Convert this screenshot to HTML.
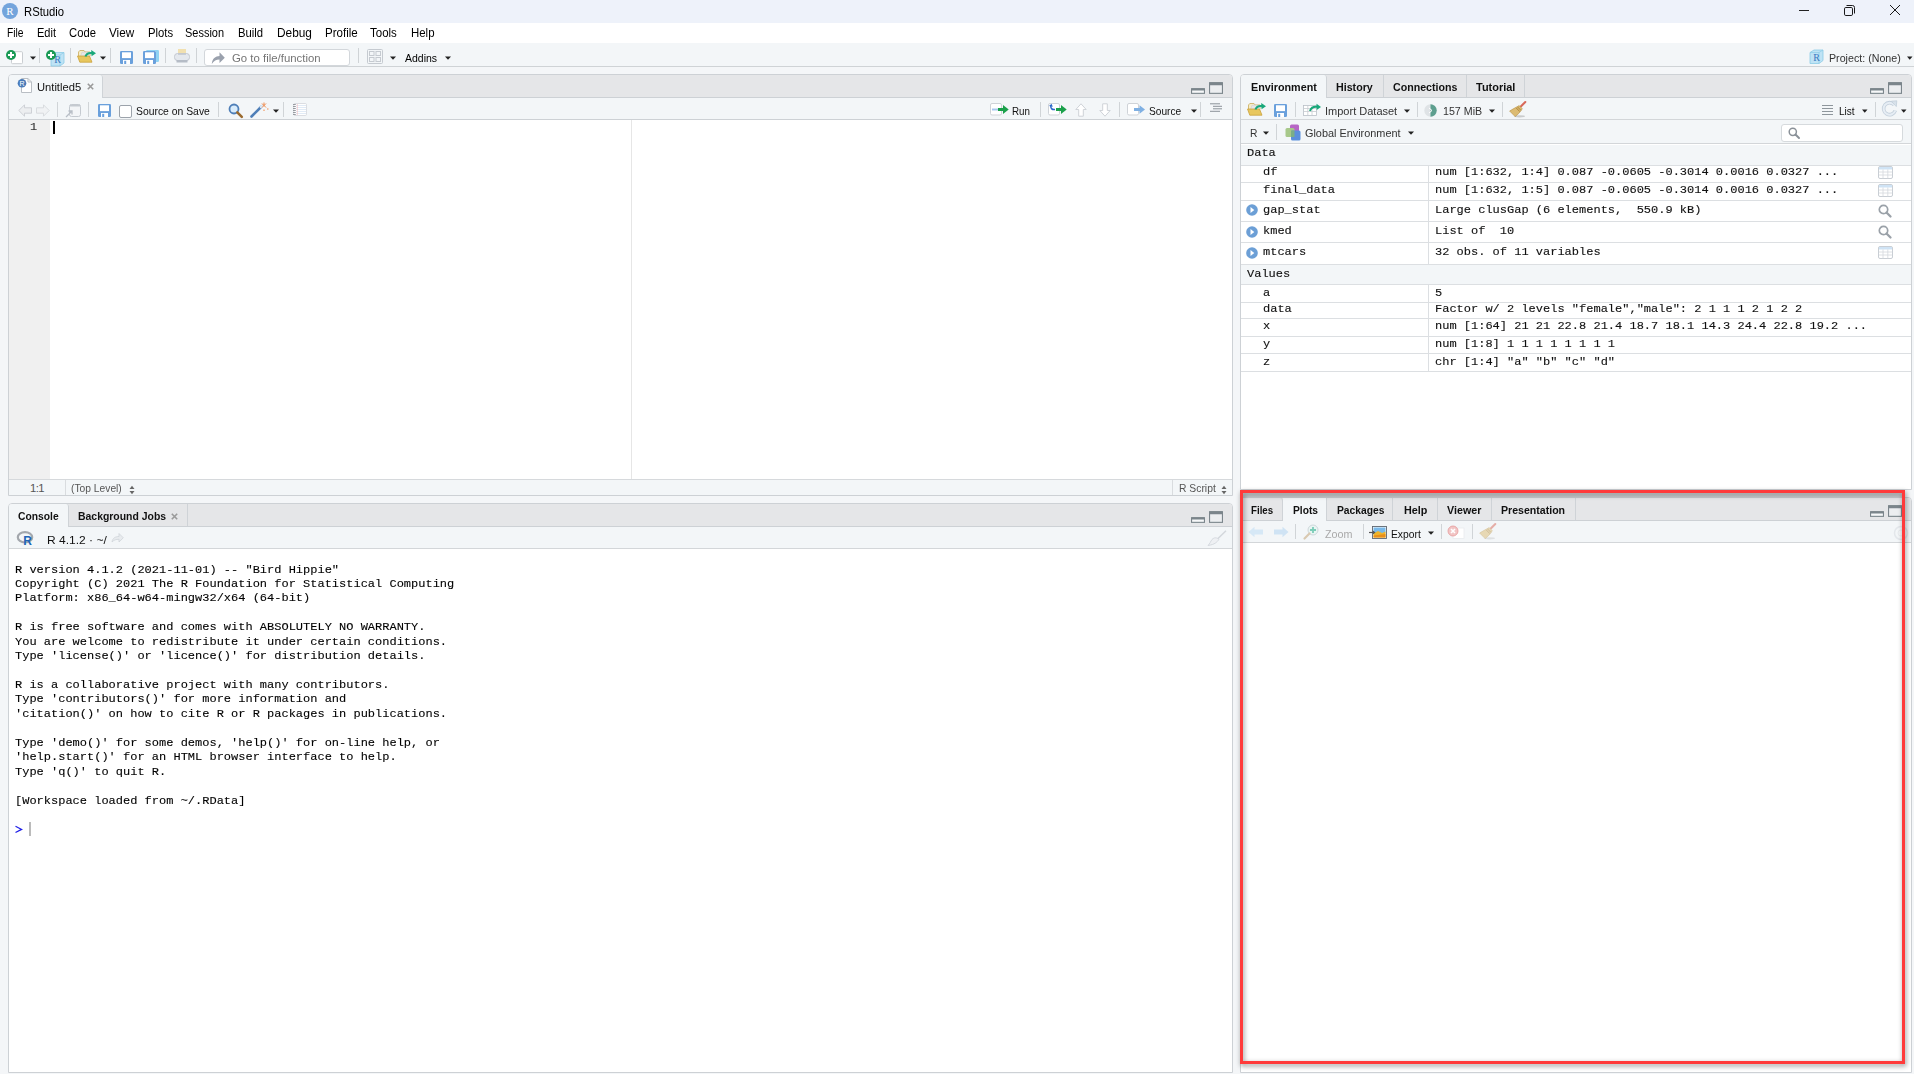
<!DOCTYPE html>
<html><head><meta charset="utf-8"><title>RStudio</title>
<style>
*{box-sizing:border-box;margin:0;padding:0}
html,body{width:1914px;height:1074px;overflow:hidden;background:#f4f6f8;font-family:"Liberation Sans",sans-serif}
.a{position:absolute}
.t{position:absolute;white-space:pre;line-height:1}
.mn{-webkit-text-stroke:0.3px currentColor}
svg.a{overflow:visible}
</style></head><body>

<div class="a" style="left:0px;top:0px;width:1914px;height:23px;background:#eef2fa"></div>
<svg class="a" style="left:2px;top:3px" width="16" height="16" viewBox="0 0 16 16"><circle cx="8" cy="8" r="8" fill="#73a4dc"/><text x="8" y="12.2" text-anchor="middle" font-family="Liberation Serif" font-size="11" fill="#fff">R</text></svg>
<div class="t" style="left:23.50px;top:6.00px;font-family:'Liberation Sans',sans-serif;font-size:12px;font-weight:normal;color:#000;transform:scaleX(0.9395);transform-origin:0 0;">RStudio</div>
<div class="a" style="left:1799px;top:10px;width:10px;height:1px;background:#222"></div>
<svg class="a" style="left:1843px;top:4px" width="13" height="13" viewBox="0 0 13 13"><rect x="1.5" y="3.5" width="8" height="8" rx="1.3" fill="none" stroke="#1a1a1a" stroke-width="1"/><path d="M3.5 1.5H9.5Q11.5 1.5 11.5 3.5V9.5" fill="none" stroke="#1a1a1a" stroke-width="1"/></svg>
<svg class="a" style="left:1889px;top:4px" width="12" height="12" viewBox="0 0 12 12"><path d="M1 1L11 11M11 1L1 11" stroke="#1a1a1a" stroke-width="1"/></svg>
<div class="a" style="left:0px;top:23px;width:1914px;height:20px;background:#fff"></div>
<div class="t" style="left:6.80px;top:27.00px;font-family:'Liberation Sans',sans-serif;font-size:12px;font-weight:normal;color:#000;transform:scaleX(0.8550);transform-origin:0 0;">File</div>
<div class="t" style="left:36.70px;top:27.00px;font-family:'Liberation Sans',sans-serif;font-size:12px;font-weight:normal;color:#000;transform:scaleX(0.9190);transform-origin:0 0;">Edit</div>
<div class="t" style="left:69.30px;top:27.00px;font-family:'Liberation Sans',sans-serif;font-size:12px;font-weight:normal;color:#000;transform:scaleX(0.9379);transform-origin:0 0;">Code</div>
<div class="t" style="left:108.90px;top:27.00px;font-family:'Liberation Sans',sans-serif;font-size:12px;font-weight:normal;color:#000;transform:scaleX(0.9769);transform-origin:0 0;">View</div>
<div class="t" style="left:147.50px;top:27.00px;font-family:'Liberation Sans',sans-serif;font-size:12px;font-weight:normal;color:#000;transform:scaleX(0.9407);transform-origin:0 0;">Plots</div>
<div class="t" style="left:185.10px;top:27.00px;font-family:'Liberation Sans',sans-serif;font-size:12px;font-weight:normal;color:#000;transform:scaleX(0.9140);transform-origin:0 0;">Session</div>
<div class="t" style="left:237.80px;top:27.00px;font-family:'Liberation Sans',sans-serif;font-size:12px;font-weight:normal;color:#000;transform:scaleX(0.9407);transform-origin:0 0;">Build</div>
<div class="t" style="left:276.60px;top:27.00px;font-family:'Liberation Sans',sans-serif;font-size:12px;font-weight:normal;color:#000;transform:scaleX(0.9886);transform-origin:0 0;">Debug</div>
<div class="t" style="left:324.80px;top:27.00px;font-family:'Liberation Sans',sans-serif;font-size:12px;font-weight:normal;color:#000;transform:scaleX(0.9618);transform-origin:0 0;">Profile</div>
<div class="t" style="left:370.20px;top:27.00px;font-family:'Liberation Sans',sans-serif;font-size:12px;font-weight:normal;color:#000;transform:scaleX(0.9571);transform-origin:0 0;">Tools</div>
<div class="t" style="left:410.60px;top:27.00px;font-family:'Liberation Sans',sans-serif;font-size:12px;font-weight:normal;color:#000;transform:scaleX(0.9520);transform-origin:0 0;">Help</div>
<div class="a" style="left:0px;top:43px;width:1914px;height:23px;background:#f3f6f8"></div>
<div class="a" style="left:0px;top:66px;width:1914px;height:1px;background:#cfd3d6"></div>
<svg class="a" style="left:5px;top:49px" width="19" height="16" viewBox="0 0 19 16"><rect x="6.5" y="2.7" width="11" height="12" rx="1" fill="#fff" stroke="#c9cdd1"/><circle cx="6" cy="6" r="5" fill="#1a9a55"/><path d="M3 6H9M6 3V9" stroke="#fff" stroke-width="2"/></svg>
<svg class="a" style="left:30px;top:56px" width="6" height="4" viewBox="0 0 6 4"><path d="M0 0.5H6L3.0 3.8Z" fill="#222"/></svg>
<div class="a" style="left:39px;top:48px;width:1px;height:15px;background:#cfd3d6"></div>
<svg class="a" style="left:45px;top:49px" width="22" height="18" viewBox="0 0 22 18"><g transform="translate(5,2.5) scale(1.0)"><path d="M1 3.5 L5 1 H14 V11.5 L10 14.5 H1 Z" fill="#bfe3f5" stroke="#8ccbe6" stroke-width="0.8"/><path d="M1 3.5 H10 V14.5 M10 3.5 L14 1" fill="none" stroke="#8ccbe6" stroke-width="0.7"/><text x="7.5" y="11.5" text-anchor="middle" font-family="Liberation Serif" font-size="10" fill="#3a78c0">R</text></g><circle cx="6" cy="6" r="5" fill="#1a9a55"/><path d="M3 6H9M6 3V9" stroke="#fff" stroke-width="2"/></svg>
<div class="a" style="left:70px;top:48px;width:1px;height:15px;background:#cfd3d6"></div>
<svg class="a" style="left:77px;top:49px" width="20" height="15" viewBox="0 0 20 15"><path d="M1.5 7 V3 L2.8 1.5 H7 L8.2 3 H13 V7" fill="#f5ecc8" stroke="#cfb36a" stroke-width="0.9"/><path d="M3.5 7.5 L5 3.2 H13.5 L12.5 8 Z" fill="#e6e6e8" stroke="#c9c9cc" stroke-width="0.5"/><path d="M0.5 7 H12.5 L15 13.2 H2.8 Z" fill="#e8c75e" stroke="#caa13c" stroke-width="0.8"/><path d="M8.5 7.5 C9.5 4.5 12.5 3.8 15 4.1" stroke="#19a87a" stroke-width="2.2" fill="none"/><path d="M14.2 1.1 L19 4.2 L14.6 7.3 Z" fill="#19a87a"/></svg>
<svg class="a" style="left:100px;top:56px" width="6" height="4" viewBox="0 0 6 4"><path d="M0 0.5H6L3.0 3.8Z" fill="#222"/></svg>
<div class="a" style="left:110px;top:48px;width:1px;height:15px;background:#cfd3d6"></div>
<svg class="a" style="left:120px;top:51px" width="13" height="13" viewBox="0 0 13 13"><rect x="0" y="0" width="13" height="13" rx="1.3" fill="#6aa0dc"/><rect x="2" y="1.3" width="9" height="5.8" fill="#fff"/><rect x="3" y="9" width="7" height="4" fill="#fff"/><rect x="4.2" y="9.8" width="2" height="3.2" fill="#6aa0dc"/></svg>
<svg class="a" style="left:143px;top:50px" width="16" height="14" viewBox="0 0 16 14"><rect x="3" y="0" width="13" height="12" rx="1.2" fill="#8fd3f3"/><rect x="5" y="1" width="8" height="10" fill="#fff"/><rect x="0" y="1" width="13" height="13" rx="1.3" fill="#6aa0dc"/><rect x="2" y="2.3" width="9" height="5.8" fill="#fff"/><rect x="3" y="10" width="7" height="4" fill="#fff"/><rect x="4.2" y="10.8" width="2" height="3.2" fill="#6aa0dc"/></svg>
<div class="a" style="left:165px;top:48px;width:1px;height:15px;background:#cfd3d6"></div>
<svg class="a" style="left:174px;top:49px" width="16" height="14" viewBox="0 0 16 14"><rect x="4" y="0" width="8" height="6" fill="#f1e0b0"/><rect x="0.5" y="4.5" width="15" height="7" rx="3" fill="#e4e8ee" stroke="#c3c8d0"/><rect x="2.5" y="11" width="11" height="2.5" fill="#b5bcc6"/><rect x="4" y="5" width="8" height="1" fill="#c9ced6"/></svg>
<div class="a" style="left:196px;top:48px;width:1px;height:15px;background:#cfd3d6"></div>
<div class="a" style="left:203.5px;top:48.5px;width:146px;height:17px;background:#fff;border:1px solid #d3d7db;border-radius:3px"></div>
<svg class="a" style="left:211px;top:51px" width="14" height="13" viewBox="0 0 14 13"><path d="M0.8 13 C1.2 7.5 4.5 5.2 8.5 5 V1.2 L13.8 6.8 L8.5 12 V8.6 C5.2 8.6 2.8 10 0.8 13 Z" fill="#9aa1ad"/></svg>
<div class="t" style="left:232.00px;top:53.00px;font-family:'Liberation Sans',sans-serif;font-size:11.3px;font-weight:normal;color:#757575;transform:scaleX(1.0080);transform-origin:0 0;">Go to file/function</div>
<div class="a" style="left:358px;top:48px;width:1px;height:15px;background:#cfd3d6"></div>
<svg class="a" style="left:367px;top:49px" width="16" height="15" viewBox="0 0 16 15"><rect x="0.5" y="0.5" width="15" height="14" rx="1" fill="none" stroke="#c5cad0"/><rect x="2.5" y="2.5" width="4.5" height="4" fill="none" stroke="#c5cad0"/><rect x="9" y="2.5" width="4.5" height="4" fill="none" stroke="#c5cad0"/><rect x="2.5" y="8.5" width="4.5" height="4" fill="none" stroke="#c5cad0"/><rect x="9" y="8.5" width="4.5" height="4" fill="none" stroke="#c5cad0"/></svg>
<svg class="a" style="left:389.5px;top:55.5px" width="6" height="4" viewBox="0 0 6 4"><path d="M0 0.5H6L3.0 3.8Z" fill="#222"/></svg>
<div class="t" style="left:404.50px;top:53.00px;font-family:'Liberation Sans',sans-serif;font-size:11.3px;font-weight:normal;color:#000;transform:scaleX(0.9286);transform-origin:0 0;">Addins</div>
<svg class="a" style="left:444.5px;top:55.5px" width="6" height="4" viewBox="0 0 6 4"><path d="M0 0.5H6L3.0 3.8Z" fill="#222"/></svg>
<svg class="a" style="left:1809px;top:49px" width="15" height="15" viewBox="0 0 15 15"><g transform="translate(0,0) scale(1.0)"><path d="M1 3.5 L5 1 H14 V11.5 L10 14.5 H1 Z" fill="#bfe3f5" stroke="#8ccbe6" stroke-width="0.8"/><path d="M1 3.5 H10 V14.5 M10 3.5 L14 1" fill="none" stroke="#8ccbe6" stroke-width="0.7"/><text x="7.5" y="11.5" text-anchor="middle" font-family="Liberation Serif" font-size="10" fill="#3a78c0">R</text></g></svg>
<div class="t" style="left:1829.20px;top:53.00px;font-family:'Liberation Sans',sans-serif;font-size:11.3px;font-weight:normal;color:#333;transform:scaleX(0.9447);transform-origin:0 0;">Project: (None)</div>
<svg class="a" style="left:1907px;top:56px" width="5.5" height="4" viewBox="0 0 5.5 4"><path d="M0 0.5H5.5L2.75 3.8Z" fill="#222"/></svg>
<div class="a" style="left:8px;top:74px;width:1225px;height:422px;background:#fff;border:1px solid #cdd1d5;border-radius:4px 4px 0 0"></div>
<div class="a" style="left:9px;top:75px;width:1223px;height:22px;background:#e5e6e8;border-radius:3px 3px 0 0"></div>
<div class="a" style="left:9px;top:75px;width:94px;height:23px;background:#f3f6f8;border-right:1px solid #cfd3d7;border-radius:3px 3px 0 0"></div>
<div class="a" style="left:9px;top:98px;width:1223px;height:21px;background:#f3f6f8"></div>
<div class="a" style="left:103px;top:97px;width:1129px;height:1px;background:#cdd1d5"></div>
<div class="a" style="left:9px;top:119px;width:1223px;height:1px;background:#cdd1d5"></div>
<svg class="a" style="left:17px;top:78px" width="16" height="15" viewBox="0 0 16 15"><path d="M4.5 0.5H11L14.5 4V14.5H4.5Z" fill="#fff" stroke="#b9bec4"/><path d="M11 0.5V4H14.5" fill="none" stroke="#b9bec4"/><circle cx="5" cy="5.2" r="4.3" fill="#4a7bb8"/><text x="5" y="8" text-anchor="middle" font-family="Liberation Sans" font-size="7" fill="#fff">R</text></svg>
<div class="t" style="left:37.00px;top:82.00px;font-family:'Liberation Sans',sans-serif;font-size:11.3px;font-weight:normal;color:#111;transform:scaleX(0.9889);transform-origin:0 0;">Untitled5</div>
<svg class="a" style="left:86.5px;top:83px" width="7" height="7" viewBox="0 0 7 7"><path d="M0.8 0.8L6.2 6.2M6.2 0.8L0.8 6.2" stroke="#9a9a9a" stroke-width="1.6"/></svg>
<svg class="a" style="left:1190px;top:82px" width="34" height="13" viewBox="0 0 34 13"><rect x="1.55" y="6.8" width="12.9" height="4.55" fill="#f7f8f9" stroke="#7b858b" stroke-width="1.1"/><path d="M1 8.5V7.4Q1 6.2 2.2 6.2H13.8Q15 6.2 15 7.4V8.5Z" fill="#7b858b"/><rect x="19.55" y="0.8" width="12.9" height="10.55" fill="#eceef0" stroke="#7b858b" stroke-width="1.1"/><path d="M19 3.2V1.4Q19 0.2 20.2 0.2H31.8Q33 0.2 33 1.4V3.2Z" fill="#7b858b"/></svg>
<svg class="a" style="left:18px;top:104px" width="32" height="13" viewBox="0 0 32 13"><path d="M0.8 6.5L6.5 0.8V3.8H13.5V9.2H6.5V12.2Z" fill="#eceef0" stroke="#c9cdd2" stroke-width="0.9"/><path d="M31.2 6.5L25.5 0.8V3.8H18.5V9.2H25.5V12.2Z" fill="#f0f2f4" stroke="#d6d9dd" stroke-width="0.9"/></svg>
<div class="a" style="left:57px;top:102px;width:1px;height:15px;background:#d0d4d7"></div>
<svg class="a" style="left:65px;top:103px" width="17" height="15" viewBox="0 0 17 15"><rect x="4.5" y="1.5" width="11" height="12" rx="2" fill="#f3f5f7" stroke="#c5cad0"/><path d="M5 2.5H15" stroke="#c5cad0" stroke-width="2"/><path d="M1 14L7 8M3.5 8H7V11.5" fill="none" stroke="#b8bec6" stroke-width="1.3"/></svg>
<div class="a" style="left:88px;top:102px;width:1px;height:15px;background:#d0d4d7"></div>
<svg class="a" style="left:98px;top:104px" width="13" height="13" viewBox="0 0 13 13"><rect x="0" y="0" width="13" height="13" rx="1.3" fill="#6aa0dc"/><rect x="2" y="1.3" width="9" height="5.8" fill="#fff"/><rect x="3" y="9" width="7" height="4" fill="#fff"/><rect x="4.2" y="9.8" width="2" height="3.2" fill="#6aa0dc"/></svg>
<div class="a" style="left:119px;top:105px;width:12.5px;height:12.5px;background:#fff;border:1px solid #9ca3ab;border-radius:2px"></div>
<div class="t" style="left:135.50px;top:106.00px;font-family:'Liberation Sans',sans-serif;font-size:11.3px;font-weight:normal;color:#111;transform:scaleX(0.9187);transform-origin:0 0;">Source on Save</div>
<div class="a" style="left:218px;top:102px;width:1px;height:15px;background:#d0d4d7"></div>
<svg class="a" style="left:228px;top:103px" width="15" height="15" viewBox="0 0 15 15"><circle cx="6" cy="6" r="4.5" fill="#d9ecfb" stroke="#4f7fb8" stroke-width="1.8"/><path d="M9.3 9.3L13.8 13.8" stroke="#9a6a2f" stroke-width="2.6" stroke-linecap="round"/></svg>
<svg class="a" style="left:250px;top:102px" width="19" height="16" viewBox="0 0 19 16"><path d="M1.5 14.5L11 5" stroke="#4f7fb8" stroke-width="2.6" stroke-linecap="round"/><path d="M11 5L12.5 3.5" stroke="#d8e6f4" stroke-width="2.6" stroke-linecap="round"/><path d="M14 0.5V3.5M12 1.5L16 5.5M16 1.5L12 5.5M17 7H18.5M14 7.5V9" stroke="#f08a4b" stroke-width="1"/></svg>
<svg class="a" style="left:273px;top:109px" width="6" height="4" viewBox="0 0 6 4"><path d="M0 0.5H6L3.0 3.8Z" fill="#222"/></svg>
<div class="a" style="left:283px;top:102px;width:1px;height:15px;background:#d0d4d7"></div>
<svg class="a" style="left:293px;top:103px" width="14" height="13" viewBox="0 0 14 13"><rect x="0.8" y="0.5" width="12.7" height="12" rx="1.2" fill="#fff" stroke="#d3d6da" stroke-width="0.8"/><path d="M3 2.5H13M3 4.5H13M3 6.5H13M3 8.5H13M3 10.5H13" stroke="#e1ebf6" stroke-width="1.1"/><path d="M4.3 1V12" stroke="#f2b5b5" stroke-width="0.6"/><path d="M0 1.5H2.8M0 3.5H2.8M0 5.5H2.8M0 7.5H2.8M0 9.5H2.8M0 11.5H2.8" stroke="#8d9298" stroke-width="0.9"/></svg>
<svg class="a" style="left:990px;top:103px" width="20" height="13" viewBox="0 0 20 13"><rect x="0.5" y="0.5" width="11" height="11.5" rx="1.5" fill="#fff" stroke="#cfd3d8"/><path d="M2 6.5H8" stroke="#a8c8ef" stroke-width="2"/><path d="M8 6.5H14" stroke="#1aa04a" stroke-width="3"/><path d="M13 2L18.7 6.5L13 11Z" fill="#1aa04a"/></svg>
<div class="t" style="left:1011.60px;top:106.00px;font-family:'Liberation Sans',sans-serif;font-size:11.3px;font-weight:normal;color:#111;transform:scaleX(0.8667);transform-origin:0 0;">Run</div>
<div class="a" style="left:1040px;top:102px;width:1px;height:15px;background:#d0d4d7"></div>
<svg class="a" style="left:1048px;top:103px" width="20" height="13" viewBox="0 0 20 13"><rect x="0.5" y="0.5" width="11" height="11.5" rx="1.5" fill="#fff" stroke="#cfd3d8"/><path d="M3 2.5C2 5 4 7 7 6.5" fill="none" stroke="#2a66c9" stroke-width="1.5"/><path d="M1 3L3.5 0.8L4.8 3.8Z" fill="#2a66c9"/><path d="M8 6.5H14" stroke="#1aa04a" stroke-width="3"/><path d="M13 2L18.7 6.5L13 11Z" fill="#1aa04a"/></svg>
<svg class="a" style="left:1075px;top:103px" width="12" height="14" viewBox="0 0 12 14"><path d="M6 0.8L11.2 6.5H8.3V13.2H3.7V6.5H0.8Z" fill="#fff" stroke="#cfd3d8" stroke-width="1"/></svg>
<svg class="a" style="left:1099px;top:103px" width="12" height="14" viewBox="0 0 12 14"><path d="M6 13.2L11.2 7.5H8.3V0.8H3.7V7.5H0.8Z" fill="#fff" stroke="#cfd3d8" stroke-width="1"/></svg>
<div class="a" style="left:1119px;top:102px;width:1px;height:15px;background:#d0d4d7"></div>
<svg class="a" style="left:1127px;top:103px" width="19" height="13" viewBox="0 0 19 13"><rect x="0.5" y="0.5" width="11" height="11.5" rx="1.5" fill="#fff" stroke="#cfd3d8"/><path d="M7 6.5H13" stroke="#7fb0e3" stroke-width="3"/><path d="M12.5 2.3L18 6.5L12.5 10.7Z" fill="#7fb0e3"/></svg>
<div class="t" style="left:1148.60px;top:106.00px;font-family:'Liberation Sans',sans-serif;font-size:11.3px;font-weight:normal;color:#111;transform:scaleX(0.9000);transform-origin:0 0;">Source</div>
<svg class="a" style="left:1191px;top:108.5px" width="6" height="4" viewBox="0 0 6 4"><path d="M0 0.5H6L3.0 3.8Z" fill="#222"/></svg>
<div class="a" style="left:1200px;top:102px;width:1px;height:15px;background:#d0d4d7"></div>
<svg class="a" style="left:1210px;top:103px" width="13" height="10" viewBox="0 0 13 10"><path d="M0 0.8H10M3 3.3H12M3 5.8H12M0 8.3H10" stroke="#8b9399" stroke-width="1"/></svg>
<div class="a" style="left:9px;top:120px;width:41px;height:359px;background:#f0f0f0"></div>
<div class="a" style="left:631px;top:120px;width:1px;height:359px;background:#e6e6e6"></div>
<div class="t" style="left:30.00px;top:121.74px;font-family:'Liberation Mono',monospace;font-size:11px;font-weight:normal;color:#333;transform:scaleX(1.0909);transform-origin:0 0;-webkit-text-stroke:0.12px currentColor;">1</div>
<div class="a" style="left:53px;top:121px;width:1.6px;height:13px;background:#000"></div>
<div class="a" style="left:9px;top:479px;width:1223px;height:1px;background:#d6d9dc"></div>
<div class="a" style="left:9px;top:480px;width:1223px;height:15px;background:#f3f6f8"></div>
<div class="a" style="left:65px;top:480px;width:1px;height:15px;background:#d9dcdf"></div>
<div class="a" style="left:1172px;top:480px;width:1px;height:15px;background:#d9dcdf"></div>
<div class="t" style="left:30.00px;top:483.00px;font-family:'Liberation Sans',sans-serif;font-size:11.3px;font-weight:normal;color:#555;letter-spacing:-0.6px">1:1</div>
<div class="t" style="left:71.40px;top:483.00px;font-family:'Liberation Sans',sans-serif;font-size:11.3px;font-weight:normal;color:#555;transform:scaleX(0.9089);transform-origin:0 0;">(Top Level)</div>
<svg class="a" style="left:129px;top:485px" width="6" height="10" viewBox="0 0 6 10"><path d="M0.5 4H5.5L3 0.8Z M0.5 6H5.5L3 9.2Z" fill="#666"/></svg>
<div class="t" style="left:1178.70px;top:483.00px;font-family:'Liberation Sans',sans-serif;font-size:11.3px;font-weight:normal;color:#555;transform:scaleX(0.9150);transform-origin:0 0;">R Script</div>
<svg class="a" style="left:1220.5px;top:485px" width="6" height="10" viewBox="0 0 6 10"><path d="M0.5 4H5.5L3 0.8Z M0.5 6H5.5L3 9.2Z" fill="#666"/></svg>
<div class="a" style="left:8px;top:503px;width:1225px;height:570px;background:#fff;border:1px solid #cdd1d5;border-radius:4px 4px 0 0"></div>
<div class="a" style="left:9px;top:504px;width:1223px;height:22px;background:#e5e6e8;border-radius:3px 3px 0 0"></div>
<div class="a" style="left:9px;top:504px;width:59.5px;height:23px;background:#f3f6f8;border-right:1px solid #cfd3d7;border-radius:3px 3px 0 0"></div>
<div class="a" style="left:68.5px;top:504px;width:119.5px;height:22px;background:#e5e6e8;border-right:1px solid #cfd3d7"></div>
<div class="a" style="left:68.5px;top:526px;width:1163.5px;height:1px;background:#cdd1d5"></div>
<div class="a" style="left:9px;top:527px;width:1223px;height:21px;background:#f3f6f8"></div>
<div class="a" style="left:9px;top:548px;width:1223px;height:1px;background:#d3d6d9"></div>
<div class="t" style="left:18.00px;top:511.00px;font-family:'Liberation Sans',sans-serif;font-size:11.3px;font-weight:bold;color:#111;transform:scaleX(0.9111);transform-origin:0 0;">Console</div>
<div class="t" style="left:78.40px;top:511.00px;font-family:'Liberation Sans',sans-serif;font-size:11.3px;font-weight:bold;color:#111;transform:scaleX(0.9232);transform-origin:0 0;">Background Jobs</div>
<svg class="a" style="left:171px;top:512.8px" width="7" height="7" viewBox="0 0 7 7"><path d="M0.8 0.8L6.2 6.2M6.2 0.8L0.8 6.2" stroke="#9a9a9a" stroke-width="1.6"/></svg>
<svg class="a" style="left:1190px;top:511px" width="34" height="13" viewBox="0 0 34 13"><rect x="1.55" y="6.8" width="12.9" height="4.55" fill="#f7f8f9" stroke="#7b858b" stroke-width="1.1"/><path d="M1 8.5V7.4Q1 6.2 2.2 6.2H13.8Q15 6.2 15 7.4V8.5Z" fill="#7b858b"/><rect x="19.55" y="0.8" width="12.9" height="10.55" fill="#eceef0" stroke="#7b858b" stroke-width="1.1"/><path d="M19 3.2V1.4Q19 0.2 20.2 0.2H31.8Q33 0.2 33 1.4V3.2Z" fill="#7b858b"/></svg>
<svg class="a" style="left:17px;top:531px" width="18" height="15" viewBox="0 0 18 15"><ellipse cx="8" cy="6.3" rx="7.2" ry="5.2" fill="none" stroke="#a3a7ad" stroke-width="2.2"/><text x="10.5" y="14" text-anchor="middle" font-family="Liberation Sans" font-weight="bold" font-size="12" fill="#2165b7">R</text></svg>
<div class="t" style="left:46.50px;top:535.00px;font-family:'Liberation Sans',sans-serif;font-size:11.3px;font-weight:normal;color:#111;transform:scaleX(1.0632);transform-origin:0 0;">R 4.1.2 · ~/</div>
<svg class="a" style="left:111px;top:532px" width="13" height="11" viewBox="0 0 13 11"><path d="M1 10C1.5 6 4.5 4.5 8 4.5V1.5L12.3 5.8L8 10V7.3C5 7.3 2.8 8 1 10Z" fill="#e8ebee" stroke="#cfd4d9" stroke-width="0.8"/></svg>
<svg class="a" style="left:1207px;top:530px" width="20" height="16" viewBox="0 0 20 16"><path d="M19 0.8L10.5 9" stroke="#d3d7dc" stroke-width="1.5"/><path d="M5 9.5C7.5 7 10 7.5 12 9.5C10 12 8 14.5 1 15.5C3 13.5 3.5 11.5 5 9.5Z" fill="#eef0f3" stroke="#d3d7dc" stroke-width="0.9"/></svg>
<div class="a" style="left:15px;top:562.55px;font-family:'Liberation Mono',monospace;font-size:11px;line-height:14.44px;white-space:pre;color:#000;transform:scaleX(1.0909);transform-origin:0 0;-webkit-text-stroke:0.1px #000">R version 4.1.2 (2021-11-01) -- &quot;Bird Hippie&quot;
Copyright (C) 2021 The R Foundation for Statistical Computing
Platform: x86_64-w64-mingw32/x64 (64-bit)

R is free software and comes with ABSOLUTELY NO WARRANTY.
You are welcome to redistribute it under certain conditions.
Type &#x27;license()&#x27; or &#x27;licence()&#x27; for distribution details.

R is a collaborative project with many contributors.
Type &#x27;contributors()&#x27; for more information and
&#x27;citation()&#x27; on how to cite R or R packages in publications.

Type &#x27;demo()&#x27; for some demos, &#x27;help()&#x27; for on-line help, or
&#x27;help.start()&#x27; for an HTML browser interface to help.
Type &#x27;q()&#x27; to quit R.

[Workspace loaded from ~/.RData]</div>
<svg class="a" style="left:14px;top:825px" width="9" height="9" viewBox="0 0 9 9"><path d="M1.5 1.3L7.6 4.4L1.5 7.5" fill="none" stroke="#1f1fe8" stroke-width="1.25"/></svg>
<div class="a" style="left:29px;top:822px;width:1.5px;height:13.5px;background:#bbb"></div>
<div class="a" style="left:1240px;top:74px;width:672px;height:416px;background:#fff;border:1px solid #cdd1d5;border-radius:4px 4px 0 0"></div>
<div class="a" style="left:1241px;top:75px;width:670px;height:22px;background:#e5e6e8;border-radius:3px 3px 0 0"></div>
<div class="a" style="left:1241px;top:75px;width:85.5px;height:23px;background:#f3f6f8;border-right:1px solid #cfd3d7;border-radius:3px 3px 0 0"></div>
<div class="a" style="left:1326.5px;top:75px;width:57.0px;height:22px;background:#e5e6e8;border-right:1px solid #cfd3d7"></div>
<div class="a" style="left:1383.5px;top:75px;width:83.0px;height:22px;background:#e5e6e8;border-right:1px solid #cfd3d7"></div>
<div class="a" style="left:1466.5px;top:75px;width:58.0px;height:22px;background:#e5e6e8;border-right:1px solid #cfd3d7"></div>
<div class="a" style="left:1326.5px;top:97px;width:584.5px;height:1px;background:#cdd1d5"></div>
<div class="a" style="left:1241px;top:98px;width:670px;height:45px;background:#f3f6f8"></div>
<div class="a" style="left:1241px;top:119px;width:670px;height:1px;background:#d3d6d9"></div>
<div class="a" style="left:1241px;top:143px;width:670px;height:1px;background:#d3d6d9"></div>
<div class="t" style="left:1251.00px;top:82.00px;font-family:'Liberation Sans',sans-serif;font-size:11.3px;font-weight:bold;color:#111;transform:scaleX(0.9536);transform-origin:0 0;">Environment</div>
<div class="t" style="left:1335.80px;top:82.00px;font-family:'Liberation Sans',sans-serif;font-size:11.3px;font-weight:bold;color:#111;transform:scaleX(0.9450);transform-origin:0 0;">History</div>
<div class="t" style="left:1392.70px;top:82.00px;font-family:'Liberation Sans',sans-serif;font-size:11.3px;font-weight:bold;color:#111;transform:scaleX(0.9412);transform-origin:0 0;">Connections</div>
<div class="t" style="left:1475.50px;top:82.00px;font-family:'Liberation Sans',sans-serif;font-size:11.3px;font-weight:bold;color:#111;transform:scaleX(0.9707);transform-origin:0 0;">Tutorial</div>
<svg class="a" style="left:1869px;top:82px" width="34" height="13" viewBox="0 0 34 13"><rect x="1.55" y="6.8" width="12.9" height="4.55" fill="#f7f8f9" stroke="#7b858b" stroke-width="1.1"/><path d="M1 8.5V7.4Q1 6.2 2.2 6.2H13.8Q15 6.2 15 7.4V8.5Z" fill="#7b858b"/><rect x="19.55" y="0.8" width="12.9" height="10.55" fill="#eceef0" stroke="#7b858b" stroke-width="1.1"/><path d="M19 3.2V1.4Q19 0.2 20.2 0.2H31.8Q33 0.2 33 1.4V3.2Z" fill="#7b858b"/></svg>
<svg class="a" style="left:1247px;top:102px" width="20" height="15" viewBox="0 0 20 15"><path d="M1.5 7 V3 L2.8 1.5 H7 L8.2 3 H13 V7" fill="#f5ecc8" stroke="#cfb36a" stroke-width="0.9"/><path d="M3.5 7.5 L5 3.2 H13.5 L12.5 8 Z" fill="#e6e6e8" stroke="#c9c9cc" stroke-width="0.5"/><path d="M0.5 7 H12.5 L15 13.2 H2.8 Z" fill="#e8c75e" stroke="#caa13c" stroke-width="0.8"/><path d="M8.5 7.5 C9.5 4.5 12.5 3.8 15 4.1" stroke="#19a87a" stroke-width="2.2" fill="none"/><path d="M14.2 1.1 L19 4.2 L14.6 7.3 Z" fill="#19a87a"/></svg>
<svg class="a" style="left:1274px;top:104px" width="13" height="13" viewBox="0 0 13 13"><rect x="0" y="0" width="13" height="13" rx="1.3" fill="#6aa0dc"/><rect x="2" y="1.3" width="9" height="5.8" fill="#fff"/><rect x="3" y="9" width="7" height="4" fill="#fff"/><rect x="4.2" y="9.8" width="2" height="3.2" fill="#6aa0dc"/></svg>
<div class="a" style="left:1295px;top:102px;width:1px;height:15px;background:#d0d4d7"></div>
<svg class="a" style="left:1303px;top:103px" width="19" height="13" viewBox="0 0 19 13"><rect x="0.5" y="2.5" width="13" height="10" fill="#fff" stroke="#b9bfc6" stroke-width="0.8"/><path d="M0.5 5.5H13.5M0.5 8.5H13.5M4.8 2.5V12.5M9 2.5V12.5" stroke="#c6cbd1" stroke-width="0.8"/><path d="M7 8C8 4.5 11 3.5 14 3.8" stroke="#19a87a" stroke-width="2" fill="none"/><path d="M13.5 0.8L18 4L13.7 7Z" fill="#19a87a"/></svg>
<div class="t" style="left:1324.60px;top:106.00px;font-family:'Liberation Sans',sans-serif;font-size:11.3px;font-weight:normal;color:#333;transform:scaleX(0.9743);transform-origin:0 0;">Import Dataset</div>
<svg class="a" style="left:1403.5px;top:108.5px" width="6" height="4" viewBox="0 0 6 4"><path d="M0 0.5H6L3.0 3.8Z" fill="#222"/></svg>
<div class="a" style="left:1417px;top:102px;width:1px;height:15px;background:#d0d4d7"></div>
<svg class="a" style="left:1424px;top:104px" width="13" height="13" viewBox="0 0 13 13"><circle cx="6.5" cy="6.5" r="6.2" fill="#dfe3e6"/><path d="M6.5 0.3A6.2 6.2 0 0 1 6.5 12.7Z" fill="#5d9f8f"/><path d="M5 4L8 6.5L5 9" fill="none" stroke="#fff" stroke-width="1"/></svg>
<div class="t" style="left:1442.60px;top:106.00px;font-family:'Liberation Sans',sans-serif;font-size:11.3px;font-weight:normal;color:#333;transform:scaleX(0.9439);transform-origin:0 0;">157 MiB</div>
<svg class="a" style="left:1488.5px;top:108.5px" width="6" height="4" viewBox="0 0 6 4"><path d="M0 0.5H6L3.0 3.8Z" fill="#222"/></svg>
<div class="a" style="left:1502px;top:102px;width:1px;height:15px;background:#d0d4d7"></div>
<svg class="a" style="left:1508px;top:101px" width="19" height="17" viewBox="0 0 19 17"><ellipse cx="11.5" cy="15.3" rx="5.5" ry="1.1" fill="#9a9a9a" opacity="0.45"/><path d="M17.3 1L12.8 5.6" stroke="#d8695a" stroke-width="2.1" stroke-linecap="round"/><path d="M11.2 4.6L14.3 7.8Q11.5 12.5 7.2 15.6L1.6 10Q6 7.4 11.2 4.6Z" fill="#dcbb72" stroke="#b58e42" stroke-width="0.6"/><path d="M9.6 6L12.9 9.3M8.3 7L11.8 10.6" stroke="#a87f36" stroke-width="0.9"/></svg>
<svg class="a" style="left:1821px;top:96px" width="12" height="20" viewBox="0 0 12 20"><path d="M1 9.5H12M1 12.5H12M1 15.5H12M1 18.5H12" stroke="#8e969c" stroke-width="1"/></svg>
<div class="t" style="left:1839.00px;top:106.00px;font-family:'Liberation Sans',sans-serif;font-size:11.3px;font-weight:normal;color:#111;transform:scaleX(0.8889);transform-origin:0 0;">List</div>
<svg class="a" style="left:1862px;top:108.5px" width="5.5" height="4" viewBox="0 0 5.5 4"><path d="M0 0.5H5.5L2.75 3.8Z" fill="#222"/></svg>
<div class="a" style="left:1875px;top:102px;width:1px;height:15px;background:#d0d4d7"></div>
<svg class="a" style="left:1881px;top:100px" width="17" height="17" viewBox="0 0 17 17"><path d="M13.2 4.8A6 6 0 1 0 14.3 10.5" fill="none" stroke="#c3cfdb" stroke-width="3.6"/><path d="M13.2 4.8A6 6 0 1 0 14.3 10.5" fill="none" stroke="#e6edf4" stroke-width="2"/><path d="M10.3 1.2L15.8 0.8L15.3 6.6Z" fill="#d7e1ea" stroke="#c3cfdb" stroke-width="0.8"/></svg>
<svg class="a" style="left:1900.5px;top:108.5px" width="5.5" height="4" viewBox="0 0 5.5 4"><path d="M0 0.5H5.5L2.75 3.8Z" fill="#222"/></svg>
<div class="t" style="left:1249.80px;top:128.00px;font-family:'Liberation Sans',sans-serif;font-size:11.3px;font-weight:normal;color:#333;transform:scaleX(0.9125);transform-origin:0 0;">R</div>
<svg class="a" style="left:1262.5px;top:131px" width="6" height="4" viewBox="0 0 6 4"><path d="M0 0.5H6L3.0 3.8Z" fill="#222"/></svg>
<div class="a" style="left:1276px;top:124px;width:1px;height:16px;background:#d0d4d7"></div>
<svg class="a" style="left:1285px;top:124px" width="16" height="17" viewBox="0 0 16 17"><rect x="5" y="0.5" width="9" height="9" rx="1.5" fill="#b767c5"/><rect x="0.5" y="4" width="9" height="9" rx="1.5" fill="#a7c88a"/><rect x="6" y="6.5" width="9.5" height="10" rx="1.5" fill="#5b8fdc"/><rect x="6" y="6.5" width="3.5" height="6.5" fill="#7bae86"/></svg>
<div class="t" style="left:1305.00px;top:128.00px;font-family:'Liberation Sans',sans-serif;font-size:11.3px;font-weight:normal;color:#333;transform:scaleX(0.9626);transform-origin:0 0;">Global Environment</div>
<svg class="a" style="left:1407.5px;top:131px" width="6" height="4" viewBox="0 0 6 4"><path d="M0 0.5H6L3.0 3.8Z" fill="#222"/></svg>
<div class="a" style="left:1781px;top:124px;width:122px;height:18px;background:#fff;border:1px solid #d6dadd;border-radius:3px"></div>
<svg class="a" style="left:1788px;top:127px" width="12" height="12" viewBox="0 0 12 12"><circle cx="4.8" cy="4.8" r="3.6" fill="none" stroke="#8a9198" stroke-width="1.5"/><path d="M7.5 7.5L11 11" stroke="#8a9198" stroke-width="2" stroke-linecap="round"/></svg>
<div class="a" style="left:1241px;top:145px;width:670px;height:20px;background:#f3f6f8"></div>
<div class="t" style="left:1247.00px;top:148.24px;font-family:'Liberation Mono',monospace;font-size:11px;font-weight:normal;color:#111;transform:scaleX(1.0909);transform-origin:0 0;-webkit-text-stroke:0.12px currentColor;">Data</div>
<div class="a" style="left:1241px;top:165px;width:670px;height:1px;background:#dcdfe2"></div>
<div class="t" style="left:1263.00px;top:167.14px;font-family:'Liberation Mono',monospace;font-size:11px;font-weight:normal;color:#111;transform:scaleX(1.0909);transform-origin:0 0;-webkit-text-stroke:0.12px currentColor;">df</div>
<div class="t" style="left:1434.50px;top:167.14px;font-family:'Liberation Mono',monospace;font-size:11px;font-weight:normal;color:#111;transform:scaleX(1.0909);transform-origin:0 0;-webkit-text-stroke:0.12px currentColor;">num [1:632, 1:4] 0.087 -0.0605 -0.3014 0.0016 0.0327 ...</div>
<div class="a" style="left:1428px;top:166px;width:1px;height:16px;background:#dcdfe2"></div>
<svg class="a" style="left:1878px;top:166px" width="15" height="13" viewBox="0 0 15 13"><rect x="0.5" y="0.5" width="14" height="12" rx="1.5" fill="#fff" stroke="#c9ced4"/><rect x="1" y="1" width="13" height="2.5" fill="#cfe3f5"/><path d="M1 6H14M1 9H14M5 3.5V12.5M9.8 3.5V12.5" stroke="#d4d8dd" stroke-width="0.8"/></svg>
<div class="a" style="left:1241px;top:182px;width:670px;height:1px;background:#dcdfe2"></div>
<div class="t" style="left:1263.00px;top:184.94px;font-family:'Liberation Mono',monospace;font-size:11px;font-weight:normal;color:#111;transform:scaleX(1.0909);transform-origin:0 0;-webkit-text-stroke:0.12px currentColor;">final_data</div>
<div class="t" style="left:1434.50px;top:184.94px;font-family:'Liberation Mono',monospace;font-size:11px;font-weight:normal;color:#111;transform:scaleX(1.0909);transform-origin:0 0;-webkit-text-stroke:0.12px currentColor;">num [1:632, 1:5] 0.087 -0.0605 -0.3014 0.0016 0.0327 ...</div>
<div class="a" style="left:1428px;top:183px;width:1px;height:17px;background:#dcdfe2"></div>
<svg class="a" style="left:1878px;top:184px" width="15" height="13" viewBox="0 0 15 13"><rect x="0.5" y="0.5" width="14" height="12" rx="1.5" fill="#fff" stroke="#c9ced4"/><rect x="1" y="1" width="13" height="2.5" fill="#cfe3f5"/><path d="M1 6H14M1 9H14M5 3.5V12.5M9.8 3.5V12.5" stroke="#d4d8dd" stroke-width="0.8"/></svg>
<div class="a" style="left:1241px;top:200px;width:670px;height:1px;background:#dcdfe2"></div>
<div class="t" style="left:1263.00px;top:204.84px;font-family:'Liberation Mono',monospace;font-size:11px;font-weight:normal;color:#111;transform:scaleX(1.0909);transform-origin:0 0;-webkit-text-stroke:0.12px currentColor;">gap_stat</div>
<div class="t" style="left:1434.50px;top:204.84px;font-family:'Liberation Mono',monospace;font-size:11px;font-weight:normal;color:#111;transform:scaleX(1.0909);transform-origin:0 0;-webkit-text-stroke:0.12px currentColor;">Large clusGap (6 elements,  550.9 kB)</div>
<div class="a" style="left:1428px;top:201px;width:1px;height:20px;background:#dcdfe2"></div>
<svg class="a" style="left:1246px;top:204px" width="12" height="12" viewBox="0 0 12 12"><circle cx="6" cy="6" r="5.8" fill="#6c9fd6"/><path d="M4.5 3L8.3 6L4.5 9Z" fill="#fff"/></svg>
<svg class="a" style="left:1878px;top:204px" width="14" height="14" viewBox="0 0 14 14"><circle cx="5.5" cy="5.5" r="4.2" fill="none" stroke="#9aa1a8" stroke-width="1.7"/><path d="M8.5 8.5L12.5 12.5" stroke="#9aa1a8" stroke-width="2.3" stroke-linecap="round"/></svg>
<div class="a" style="left:1241px;top:221px;width:670px;height:1px;background:#dcdfe2"></div>
<div class="t" style="left:1263.00px;top:225.84px;font-family:'Liberation Mono',monospace;font-size:11px;font-weight:normal;color:#111;transform:scaleX(1.0909);transform-origin:0 0;-webkit-text-stroke:0.12px currentColor;">kmed</div>
<div class="t" style="left:1434.50px;top:225.84px;font-family:'Liberation Mono',monospace;font-size:11px;font-weight:normal;color:#111;transform:scaleX(1.0909);transform-origin:0 0;-webkit-text-stroke:0.12px currentColor;">List of  10</div>
<div class="a" style="left:1428px;top:222px;width:1px;height:20px;background:#dcdfe2"></div>
<svg class="a" style="left:1246px;top:226px" width="12" height="12" viewBox="0 0 12 12"><circle cx="6" cy="6" r="5.8" fill="#6c9fd6"/><path d="M4.5 3L8.3 6L4.5 9Z" fill="#fff"/></svg>
<svg class="a" style="left:1878px;top:225px" width="14" height="14" viewBox="0 0 14 14"><circle cx="5.5" cy="5.5" r="4.2" fill="none" stroke="#9aa1a8" stroke-width="1.7"/><path d="M8.5 8.5L12.5 12.5" stroke="#9aa1a8" stroke-width="2.3" stroke-linecap="round"/></svg>
<div class="a" style="left:1241px;top:242px;width:670px;height:1px;background:#dcdfe2"></div>
<div class="t" style="left:1263.00px;top:246.84px;font-family:'Liberation Mono',monospace;font-size:11px;font-weight:normal;color:#111;transform:scaleX(1.0909);transform-origin:0 0;-webkit-text-stroke:0.12px currentColor;">mtcars</div>
<div class="t" style="left:1434.50px;top:246.84px;font-family:'Liberation Mono',monospace;font-size:11px;font-weight:normal;color:#111;transform:scaleX(1.0909);transform-origin:0 0;-webkit-text-stroke:0.12px currentColor;">32 obs. of 11 variables</div>
<div class="a" style="left:1428px;top:243px;width:1px;height:21px;background:#dcdfe2"></div>
<svg class="a" style="left:1246px;top:247px" width="12" height="12" viewBox="0 0 12 12"><circle cx="6" cy="6" r="5.8" fill="#6c9fd6"/><path d="M4.5 3L8.3 6L4.5 9Z" fill="#fff"/></svg>
<svg class="a" style="left:1878px;top:246px" width="15" height="13" viewBox="0 0 15 13"><rect x="0.5" y="0.5" width="14" height="12" rx="1.5" fill="#fff" stroke="#c9ced4"/><rect x="1" y="1" width="13" height="2.5" fill="#cfe3f5"/><path d="M1 6H14M1 9H14M5 3.5V12.5M9.8 3.5V12.5" stroke="#d4d8dd" stroke-width="0.8"/></svg>
<div class="a" style="left:1241px;top:264px;width:670px;height:1px;background:#dcdfe2"></div>
<div class="a" style="left:1241px;top:265px;width:670px;height:19px;background:#f3f6f8"></div>
<div class="t" style="left:1247.00px;top:268.64px;font-family:'Liberation Mono',monospace;font-size:11px;font-weight:normal;color:#111;transform:scaleX(1.0909);transform-origin:0 0;-webkit-text-stroke:0.12px currentColor;">Values</div>
<div class="a" style="left:1241px;top:284px;width:670px;height:1px;background:#dcdfe2"></div>
<div class="t" style="left:1263.00px;top:287.64px;font-family:'Liberation Mono',monospace;font-size:11px;font-weight:normal;color:#111;transform:scaleX(1.0909);transform-origin:0 0;-webkit-text-stroke:0.12px currentColor;">a</div>
<div class="t" style="left:1434.50px;top:287.64px;font-family:'Liberation Mono',monospace;font-size:11px;font-weight:normal;color:#111;transform:scaleX(1.0909);transform-origin:0 0;-webkit-text-stroke:0.12px currentColor;">5</div>
<div class="a" style="left:1428px;top:285px;width:1px;height:17px;background:#dcdfe2"></div>
<div class="a" style="left:1241px;top:302px;width:670px;height:1px;background:#dcdfe2"></div>
<div class="t" style="left:1263.00px;top:304.14px;font-family:'Liberation Mono',monospace;font-size:11px;font-weight:normal;color:#111;transform:scaleX(1.0909);transform-origin:0 0;-webkit-text-stroke:0.12px currentColor;">data</div>
<div class="t" style="left:1434.50px;top:304.14px;font-family:'Liberation Mono',monospace;font-size:11px;font-weight:normal;color:#111;transform:scaleX(1.0909);transform-origin:0 0;-webkit-text-stroke:0.12px currentColor;">Factor w/ 2 levels &quot;female&quot;,&quot;male&quot;: 2 1 1 1 2 1 2 2</div>
<div class="a" style="left:1428px;top:303px;width:1px;height:15px;background:#dcdfe2"></div>
<div class="a" style="left:1241px;top:318px;width:670px;height:1px;background:#dcdfe2"></div>
<div class="t" style="left:1263.00px;top:321.44px;font-family:'Liberation Mono',monospace;font-size:11px;font-weight:normal;color:#111;transform:scaleX(1.0909);transform-origin:0 0;-webkit-text-stroke:0.12px currentColor;">x</div>
<div class="t" style="left:1434.50px;top:321.44px;font-family:'Liberation Mono',monospace;font-size:11px;font-weight:normal;color:#111;transform:scaleX(1.0909);transform-origin:0 0;-webkit-text-stroke:0.12px currentColor;">num [1:64] 21 21 22.8 21.4 18.7 18.1 14.3 24.4 22.8 19.2 ...</div>
<div class="a" style="left:1428px;top:319px;width:1px;height:17px;background:#dcdfe2"></div>
<div class="a" style="left:1241px;top:336px;width:670px;height:1px;background:#dcdfe2"></div>
<div class="t" style="left:1263.00px;top:338.84px;font-family:'Liberation Mono',monospace;font-size:11px;font-weight:normal;color:#111;transform:scaleX(1.0909);transform-origin:0 0;-webkit-text-stroke:0.12px currentColor;">y</div>
<div class="t" style="left:1434.50px;top:338.84px;font-family:'Liberation Mono',monospace;font-size:11px;font-weight:normal;color:#111;transform:scaleX(1.0909);transform-origin:0 0;-webkit-text-stroke:0.12px currentColor;">num [1:8] 1 1 1 1 1 1 1 1</div>
<div class="a" style="left:1428px;top:337px;width:1px;height:16px;background:#dcdfe2"></div>
<div class="a" style="left:1241px;top:353px;width:670px;height:1px;background:#dcdfe2"></div>
<div class="t" style="left:1263.00px;top:356.64px;font-family:'Liberation Mono',monospace;font-size:11px;font-weight:normal;color:#111;transform:scaleX(1.0909);transform-origin:0 0;-webkit-text-stroke:0.12px currentColor;">z</div>
<div class="t" style="left:1434.50px;top:356.64px;font-family:'Liberation Mono',monospace;font-size:11px;font-weight:normal;color:#111;transform:scaleX(1.0909);transform-origin:0 0;-webkit-text-stroke:0.12px currentColor;">chr [1:4] &quot;a&quot; &quot;b&quot; &quot;c&quot; &quot;d&quot;</div>
<div class="a" style="left:1428px;top:354px;width:1px;height:17px;background:#dcdfe2"></div>
<div class="a" style="left:1241px;top:371px;width:670px;height:1px;background:#dcdfe2"></div>
<div class="a" style="left:1240px;top:497px;width:672px;height:576px;background:#fff;border:1px solid #cdd1d5;border-radius:4px 4px 0 0"></div>
<div class="a" style="left:1241px;top:498px;width:670px;height:22px;background:#e5e6e8;border-radius:3px 3px 0 0"></div>
<div class="a" style="left:1241px;top:498px;width:41.5px;height:22px;background:#e5e6e8;border-right:1px solid #cfd3d7;border-radius:3px 3px 0 0"></div>
<div class="a" style="left:1282.5px;top:498px;width:44.5px;height:23px;background:#f3f6f8;border-right:1px solid #cfd3d7;border-radius:0"></div>
<div class="a" style="left:1327px;top:498px;width:66px;height:22px;background:#e5e6e8;border-right:1px solid #cfd3d7"></div>
<div class="a" style="left:1393px;top:498px;width:44.5px;height:22px;background:#e5e6e8;border-right:1px solid #cfd3d7"></div>
<div class="a" style="left:1437.5px;top:498px;width:54.0px;height:22px;background:#e5e6e8;border-right:1px solid #cfd3d7"></div>
<div class="a" style="left:1491.5px;top:498px;width:84.5px;height:22px;background:#e5e6e8;border-right:1px solid #cfd3d7"></div>
<div class="a" style="left:1241px;top:520px;width:41.5px;height:1px;background:#cdd1d5"></div>
<div class="a" style="left:1327px;top:520px;width:584px;height:1px;background:#cdd1d5"></div>
<div class="a" style="left:1241px;top:521px;width:670px;height:21px;background:#f3f6f8"></div>
<div class="a" style="left:1241px;top:542px;width:670px;height:1px;background:#d3d6d9"></div>
<div class="t" style="left:1250.70px;top:505.00px;font-family:'Liberation Sans',sans-serif;font-size:11.3px;font-weight:bold;color:#111;transform:scaleX(0.8615);transform-origin:0 0;">Files</div>
<div class="t" style="left:1292.50px;top:505.00px;font-family:'Liberation Sans',sans-serif;font-size:11.3px;font-weight:bold;color:#111;transform:scaleX(0.9071);transform-origin:0 0;">Plots</div>
<div class="t" style="left:1337.20px;top:505.00px;font-family:'Liberation Sans',sans-serif;font-size:11.3px;font-weight:bold;color:#111;transform:scaleX(0.9096);transform-origin:0 0;">Packages</div>
<div class="t" style="left:1403.60px;top:505.00px;font-family:'Liberation Sans',sans-serif;font-size:11.3px;font-weight:bold;color:#111;transform:scaleX(0.9560);transform-origin:0 0;">Help</div>
<div class="t" style="left:1446.70px;top:505.00px;font-family:'Liberation Sans',sans-serif;font-size:11.3px;font-weight:bold;color:#111;transform:scaleX(0.9486);transform-origin:0 0;">Viewer</div>
<div class="t" style="left:1501.40px;top:505.00px;font-family:'Liberation Sans',sans-serif;font-size:11.3px;font-weight:bold;color:#111;transform:scaleX(0.9362);transform-origin:0 0;">Presentation</div>
<svg class="a" style="left:1869px;top:505px" width="34" height="13" viewBox="0 0 34 13"><rect x="1.55" y="6.8" width="12.9" height="4.55" fill="#f7f8f9" stroke="#7b858b" stroke-width="1.1"/><path d="M1 8.5V7.4Q1 6.2 2.2 6.2H13.8Q15 6.2 15 7.4V8.5Z" fill="#7b858b"/><rect x="19.55" y="0.8" width="12.9" height="10.55" fill="#eceef0" stroke="#7b858b" stroke-width="1.1"/><path d="M19 3.2V1.4Q19 0.2 20.2 0.2H31.8Q33 0.2 33 1.4V3.2Z" fill="#7b858b"/></svg>
<svg class="a" style="left:1248px;top:526px" width="16" height="12" viewBox="0 0 16 12"><path d="M0.5 6L6.5 0.8V3.5H15V8.5H6.5V11.2Z" fill="#d6e8f6"/></svg>
<svg class="a" style="left:1273px;top:526px" width="16" height="12" viewBox="0 0 16 12"><path d="M15.5 6L9.5 0.8V3.5H1V8.5H9.5V11.2Z" fill="#cfe3f4"/></svg>
<div class="a" style="left:1295px;top:524px;width:1px;height:15px;background:#d0d4d7"></div>
<svg class="a" style="left:1303px;top:524px" width="16" height="16" viewBox="0 0 16 16"><circle cx="10" cy="6" r="5" fill="#e9f5f3" stroke="#cfd8dc" stroke-width="1"/><path d="M10 3V9M7 6H13" stroke="#7ccdb8" stroke-width="1.8"/><path d="M1.5 14.5L6.5 9.5" stroke="#d9c9b0" stroke-width="2.2" stroke-linecap="round"/></svg>
<div class="t" style="left:1324.60px;top:529.00px;font-family:'Liberation Sans',sans-serif;font-size:11.3px;font-weight:normal;color:#a9a9a9;transform:scaleX(0.9517);transform-origin:0 0;">Zoom</div>
<div class="a" style="left:1363px;top:524px;width:1px;height:15px;background:#d0d4d7"></div>
<svg class="a" style="left:1369px;top:526px" width="18" height="13" viewBox="0 0 18 13"><rect x="3.5" y="0.5" width="14" height="12" fill="#fff" stroke="#5d6670" stroke-width="0.9"/><rect x="4.5" y="1.5" width="12" height="6" fill="#79b9ea"/><path d="M4.5 7.5L9 5L13 7L16.5 5.5V11.5H4.5Z" fill="#f0b429"/><path d="M4.5 9.5L16.5 8V11.5H4.5Z" fill="#e88f1a"/><path d="M0 6.5H5" stroke="#555" stroke-width="1.2"/><path d="M4 4.5L6.5 6.5L4 8.5Z" fill="#555"/></svg>
<div class="t" style="left:1390.70px;top:529.00px;font-family:'Liberation Sans',sans-serif;font-size:11.3px;font-weight:normal;color:#111;transform:scaleX(0.9121);transform-origin:0 0;">Export</div>
<svg class="a" style="left:1427.5px;top:531px" width="6" height="4" viewBox="0 0 6 4"><path d="M0 0.5H6L3.0 3.8Z" fill="#222"/></svg>
<div class="a" style="left:1441px;top:524px;width:1px;height:15px;background:#d0d4d7"></div>
<svg class="a" style="left:1447px;top:525px" width="18" height="14" viewBox="0 0 18 14"><rect x="6" y="3" width="11" height="10.5" fill="#fff" stroke="#e9ebee" stroke-width="0.8"/><circle cx="6" cy="6" r="5" fill="#f2c5c5" stroke="#e49a9a" stroke-width="0.8"/><path d="M4 4L8 8M8 4L4 8" stroke="#fff" stroke-width="1.6"/></svg>
<div class="a" style="left:1472px;top:524px;width:1px;height:15px;background:#d0d4d7"></div>
<svg class="a" style="left:1478px;top:523px" width="19" height="17" viewBox="0 0 19 17"><g opacity="0.5"><ellipse cx="11.5" cy="15.3" rx="5.5" ry="1.1" fill="#9a9a9a" opacity="0.45"/><path d="M17.3 1L12.8 5.6" stroke="#d8695a" stroke-width="2.1" stroke-linecap="round"/><path d="M11.2 4.6L14.3 7.8Q11.5 12.5 7.2 15.6L1.6 10Q6 7.4 11.2 4.6Z" fill="#dcbb72" stroke="#b58e42" stroke-width="0.6"/><path d="M9.6 6L12.9 9.3M8.3 7L11.8 10.6" stroke="#a87f36" stroke-width="0.9"/></g></svg>
<svg class="a" style="left:1893px;top:525px" width="16" height="16" viewBox="0 0 16 16"><circle cx="8" cy="8" r="6.5" fill="none" stroke="#e3e7eb" stroke-width="1.5"/><circle cx="8" cy="8" r="3" fill="none" stroke="#e8ebee" stroke-width="1"/></svg>
<div class="a" style="left:1243px;top:493px;width:659px;height:4.5px;background:linear-gradient(#d6d8da,#c6cacd)"></div>
<div class="a" style="left:1240px;top:490px;width:665px;height:574px;border:3px solid #ff3a3a;filter:drop-shadow(1.5px 2.5px 2.5px rgba(0,0,0,0.45))"></div>
</body></html>
